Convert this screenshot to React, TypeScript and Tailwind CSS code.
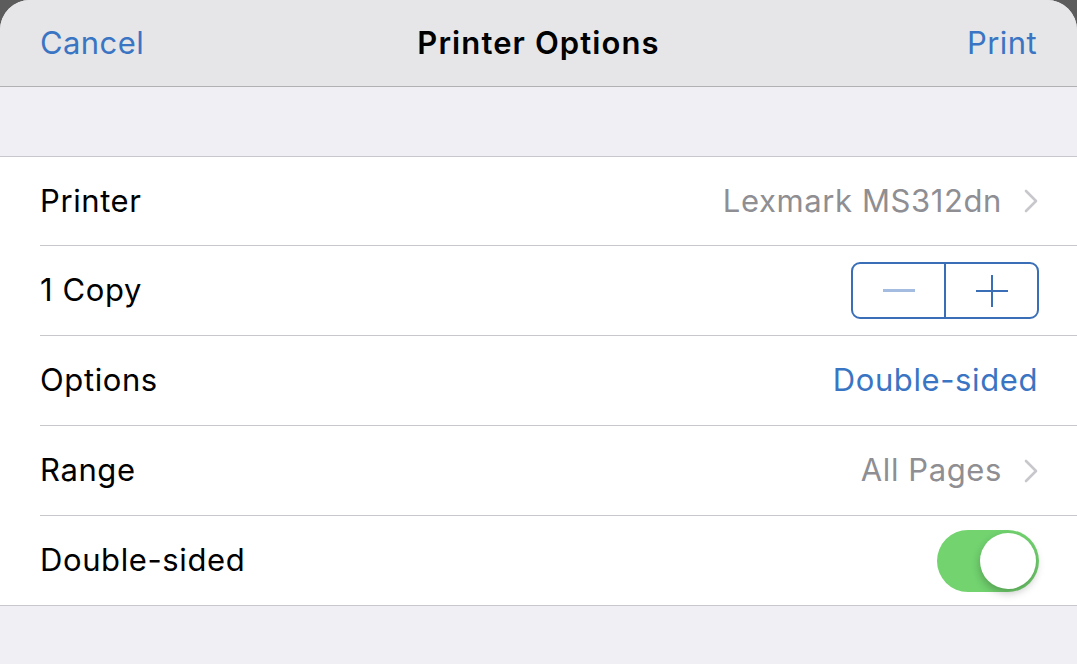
const font = { fontFamily: "Inter, 'Noto Sans', sans-serif" };

function Row({ label, children, h }: { label: string; children?: React.ReactNode; h: string }) {
  return (
    <div className="pl-[40px]">
      <div className={"flex items-center justify-between pr-[38px] " + h}>
        <span className="text-[31px] text-black tracking-[0.6px]">{label}</span>
        {children}
      </div>
    </div>
  );
}

function Chevron() {
  return (
    <svg width="14" height="24" viewBox="0 0 14 24" className="ml-[22px] mr-[1px]">
      <path d="M2 2 L12 12 L2 22" fill="none" stroke="#c7c7cc" strokeWidth="2.6" strokeLinecap="round" strokeLinejoin="round" />
    </svg>
  );
}

export default function App() {
  return (
    <div className="h-[664px] w-[1077px] overflow-hidden bg-[#5c5c5c]" style={font}>
      <div className="flex h-full flex-col overflow-hidden rounded-tl-[30px] rounded-tr-[30px] bg-[#efeff4]">
        {/* Navigation bar */}
        <div className="grid h-[87px] shrink-0 grid-cols-[1fr_auto_1fr] items-center border-b border-[#b1b1b3] bg-[#e6e6e8] px-[40px]">
          <span className="text-[31px] text-[#3a75c4] tracking-[0.4px]">Cancel</span>
          <span className="text-[31px] font-semibold text-black tracking-[1.1px]">Printer Options</span>
          <span className="text-right text-[31px] text-[#3a75c4] tracking-[0.4px]">Print</span>
        </div>

        <div className="h-[69px] shrink-0" />

        {/* Settings group */}
        <div className="border-y border-[#c8c7cc] bg-white">
          <Row label="Printer" h="h-[89px] border-b border-[#c8c7cc]">
            <div className="flex items-center">
              <span className="text-[31px] text-[#8e8e93] tracking-[0.6px]">Lexmark MS312dn</span>
              <Chevron />
            </div>
          </Row>
          <Row label="1 Copy" h="h-[90px] border-b border-[#c8c7cc]">
            <div className="flex h-[57px] w-[188px] overflow-hidden rounded-[9px] border-2 border-[#3a6fb8]">
              <div className="flex flex-1 items-center justify-center border-r-2 border-[#3a6fb8]">
                <div className="h-[3px] w-[32px] bg-[#a3bcdf]" />
              </div>
              <div className="relative flex flex-1 items-center justify-center">
                <div className="absolute h-[2px] w-[32px] bg-[#3a6fb8]" />
                <div className="absolute h-[32px] w-[2px] bg-[#3a6fb8]" />
              </div>
            </div>
          </Row>
          <Row label="Options" h="h-[90px] border-b border-[#c8c7cc]">
            <span className="mr-[1px] text-[31px] text-[#3a75c4] tracking-[0.6px]">Double-sided</span>
          </Row>
          <Row label="Range" h="h-[90px] border-b border-[#c8c7cc]">
            <div className="flex items-center">
              <span className="text-[31px] text-[#8e8e93] tracking-[0.6px]">All Pages</span>
              <Chevron />
            </div>
          </Row>
          <Row label="Double-sided" h="h-[89px]">
            <div className="flex h-[62px] w-[102px] items-center justify-end rounded-full bg-[#72d36f] p-[3px]">
              <div className="h-[56px] w-[56px] rounded-full bg-white shadow-[0_4px_8px_rgba(0,0,0,0.25)]" />
            </div>
          </Row>
        </div>

        <div className="flex-1" />
      </div>
    </div>
  );
}
